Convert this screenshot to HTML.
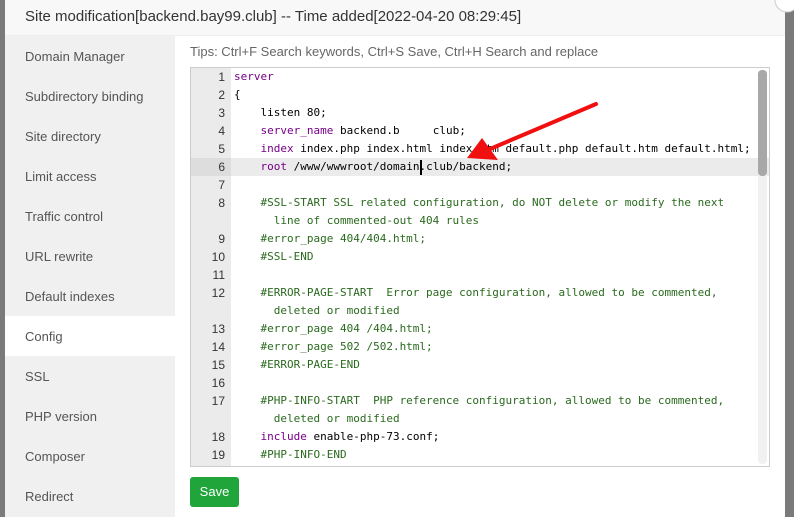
<!DOCTYPE html>
<html><head><style>
body{margin:0;width:794px;height:517px;background:#7a7a7a;position:relative;overflow:hidden;font-family:"Liberation Sans",Arial,sans-serif}
.dlg{position:absolute;left:5px;top:0;width:780px;height:517px;background:#fff}
.title{height:35px;background:#f8f8f8;border-bottom:1px solid #eee;font-size:15px;color:#333;line-height:33px;padding-left:20px}
.side{position:absolute;left:0;top:36px;width:170px;height:481px;background:#f0f0f0}
.side div{height:40px;line-height:41px;padding-left:20px;font-size:13px;color:#555}
.side .on{background:#fff}
.tips{position:absolute;left:185px;top:44px;font-size:13px;color:#666}
.ed{position:absolute;left:185px;top:67px;width:578px;height:398px;border:1px solid #ccc;background:#fff;overflow:hidden;font-family:"DejaVu Sans Mono","Liberation Mono",monospace;font-size:11px}
.gut{position:absolute;left:0;top:0;width:40px;height:100%;background:#ebebeb}
.ln{position:absolute;left:0;width:34px;text-align:right;color:#333;font-size:12px;line-height:18px;font-family:"Liberation Sans",sans-serif}
.cd{position:absolute;left:43px;white-space:pre;color:#000;line-height:18px}
.k{color:#708}.c{color:#2a6a1e}
.sb{position:absolute;right:2px;top:2px;width:9px;height:394px;background:#f1f1f1;border-radius:4px}
.th{position:absolute;right:2px;top:2px;width:9px;height:106px;background:#a8a8a8;border-radius:4px}
.save{position:absolute;left:185px;top:477px;width:49px;height:30px;background:#20a53a;border-radius:3px;color:#fff;font-size:13px;text-align:center;line-height:30px}
</style></head><body>
<div class="dlg">
<div class="title">Site modification[backend.bay99.club] -- Time added[2022-04-20 08:29:45]</div>
<div class="side">
<div>Domain Manager</div><div>Subdirectory binding</div><div>Site directory</div><div>Limit access</div><div>Traffic control</div><div>URL rewrite</div><div>Default indexes</div><div class="on">Config</div><div>SSL</div><div>PHP version</div><div>Composer</div><div>Redirect</div>
</div>
<div class="tips">Tips: Ctrl+F Search keywords, Ctrl+S Save, Ctrl+H Search and replace</div>
<div class="ed">
<div class="gut"></div>
<div style="position:absolute;left:0;top:90px;width:100%;height:18px;background:#ebebeb"></div>
<div style="position:absolute;left:0;top:90px;width:40px;height:18px;background:#ddd"></div>
<div class="ln" style="top:0px">1</div><div class="cd k" style="top:0px">server</div>
<div class="ln" style="top:18px">2</div><div class="cd" style="top:18px">{</div>
<div class="ln" style="top:36px">3</div><div class="cd" style="top:36px">    listen 80;</div>
<div class="ln" style="top:54px">4</div><div class="cd" style="top:54px">    <span class="k">server_name</span> backend.b     club;</div>
<div class="ln" style="top:72px">5</div><div class="cd" style="top:72px">    <span class="k">index</span> index.php index.html index.htm default.php default.htm default.html;</div>
<div class="ln" style="top:90px">6</div><div class="cd" style="top:90px">    <span class="k">root</span> /www/wwwroot/domain.club/backend;</div>
<div style="position:absolute;left:229px;top:92px;width:2px;height:15px;background:#000"></div>
<div class="ln" style="top:108px">7</div>
<div class="ln" style="top:126px">8</div><div class="cd c" style="top:126px">    #SSL-START SSL related configuration, do NOT delete or modify the next
      line of commented-out 404 rules</div>
<div class="ln" style="top:162px">9</div><div class="cd c" style="top:162px">    #error_page 404/404.html;</div>
<div class="ln" style="top:180px">10</div><div class="cd c" style="top:180px">    #SSL-END</div>
<div class="ln" style="top:198px">11</div>
<div class="ln" style="top:216px">12</div><div class="cd c" style="top:216px">    #ERROR-PAGE-START  Error page configuration, allowed to be commented,
      deleted or modified</div>
<div class="ln" style="top:252px">13</div><div class="cd c" style="top:252px">    #error_page 404 /404.html;</div>
<div class="ln" style="top:270px">14</div><div class="cd c" style="top:270px">    #error_page 502 /502.html;</div>
<div class="ln" style="top:288px">15</div><div class="cd c" style="top:288px">    #ERROR-PAGE-END</div>
<div class="ln" style="top:306px">16</div>
<div class="ln" style="top:324px">17</div><div class="cd c" style="top:324px">    #PHP-INFO-START  PHP reference configuration, allowed to be commented,
      deleted or modified</div>
<div class="ln" style="top:360px">18</div><div class="cd" style="top:360px">    <span class="k">include</span> enable-php-73.conf;</div>
<div class="ln" style="top:378px">19</div><div class="cd c" style="top:378px">    #PHP-INFO-END</div>
<div class="sb"></div><div class="th"></div>
</div>
<div class="save">Save</div>
</div>
<svg style="position:absolute;left:0;top:0" width="794" height="517">
<line x1="596" y1="104" x2="490" y2="149" stroke="#f01010" stroke-width="4" stroke-linecap="round"/>
<polygon points="467,158 482,138 498,160" fill="#f01010"/>
<circle cx="787" cy="0" r="12" fill="#fff" stroke="#ccc"/>
</svg>
</body></html>
